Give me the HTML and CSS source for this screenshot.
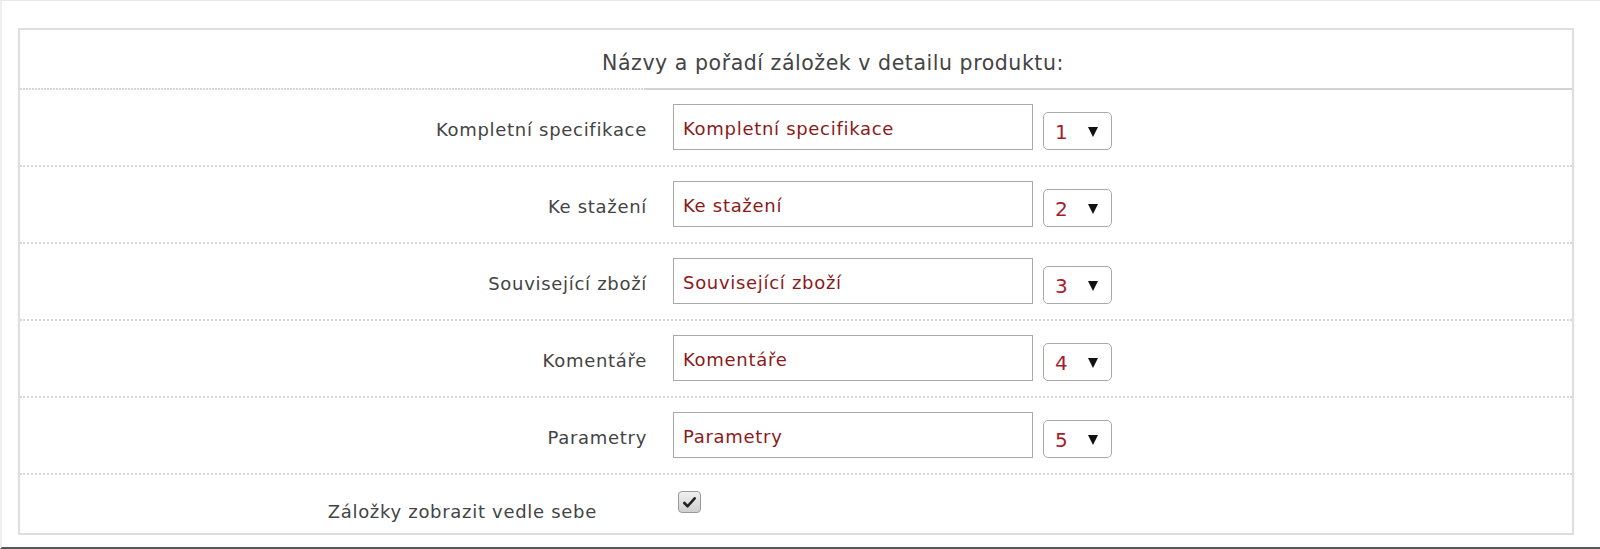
FILE: index.html
```html
<!DOCTYPE html>
<html lang="cs">
<head>
<meta charset="utf-8">
<title>Záložky</title>
<link rel="stylesheet" href="styles.css">
</head>
<body>
<div class="page">
  <div class="box">
    <div class="head">Názvy a pořadí záložek v detailu produktu:</div>

    <div class="row">
      <div class="label">Kompletní specifikace</div>
      <div class="ctrl">
        <div class="field">Kompletní specifikace</div>
        <div class="order"><span class="num">1</span><span class="arrow"></span></div>
      </div>
    </div>

    <div class="row">
      <div class="label">Ke stažení</div>
      <div class="ctrl">
        <div class="field">Ke stažení</div>
        <div class="order"><span class="num">2</span><span class="arrow"></span></div>
      </div>
    </div>

    <div class="row">
      <div class="label">Související zboží</div>
      <div class="ctrl">
        <div class="field">Související zboží</div>
        <div class="order"><span class="num">3</span><span class="arrow"></span></div>
      </div>
    </div>

    <div class="row">
      <div class="label">Komentáře</div>
      <div class="ctrl">
        <div class="field">Komentáře</div>
        <div class="order"><span class="num">4</span><span class="arrow"></span></div>
      </div>
    </div>

    <div class="row">
      <div class="label">Parametry</div>
      <div class="ctrl">
        <div class="field">Parametry</div>
        <div class="order"><span class="num">5</span><span class="arrow"></span></div>
      </div>
    </div>

    <div class="row last">
      <div class="label">Záložky zobrazit vedle sebe</div>
      <div class="ctrl">
        <div class="check">
          <svg viewBox="0 0 16 16" width="15" height="15"><path d="M2.5 8.5 L6 12 L13.5 3.5" fill="none" stroke="#222" stroke-width="2.8" stroke-linecap="round" stroke-linejoin="round"/></svg>
        </div>
      </div>
    </div>
  </div>
</div>
</body>
</html>
```

FILE: styles.css
```css
* { box-sizing: border-box; }

html, body {
  margin: 0;
  padding: 0;
  background: #ffffff;
}

body {
  font-family: "DejaVu Sans", "Liberation Sans", sans-serif;
  font-size: 18px;
  letter-spacing: 0.7px;
  color: #444444;
}

.page {
  width: 1600px;
  height: 549px;
  border-top: 1px solid #e8e8e8;
  border-left: 2px solid #efefef;
  border-bottom: 2px solid #555555;
  padding: 27px 0 0 16px;
}

.box {
  width: 1556px;
  height: 507px;
  border: 2px solid #dedede;
  display: flex;
  flex-direction: column;
}

.head {
  height: 60px;
  padding: 21px 0 0 74px;
  text-align: center;
  font-size: 20.5px;
  letter-spacing: 0.55px;
  color: #444444;
  background:
    linear-gradient(#d2d2d2, #d2d2d2) right bottom / calc(100% - 626px) 2px no-repeat,
    repeating-linear-gradient(90deg, #d6d6d6 0 2px, transparent 2px 3px) left bottom / 626px 2px no-repeat;
}

.row {
  height: 77px;
  display: grid;
  grid-template-columns: 640px 1fr;
  border-bottom: 2px dotted #d8d8d8;
}

.row.last {
  flex: 1;
  height: auto;
  border-bottom: 0;
}

.label {
  display: flex;
  align-items: center;
  justify-content: flex-end;
  padding: 3px 13px 0 0;
  color: #444444;
}

.ctrl {
  display: flex;
  align-items: flex-end;
  gap: 10px;
  padding: 0 0 15px 13px;
}

.field {
  width: 360px;
  height: 46px;
  border: 1px solid #a9a9a9;
  padding: 3px 9px 0;
  display: flex;
  align-items: center;
  color: #8b1a1a;
}

.order {
  width: 69px;
  height: 38px;
  border: 1px solid #aaaaaa;
  border-radius: 5px;
  display: flex;
  align-items: center;
  justify-content: space-between;
  padding: 2px 13px 0 11px;
  color: #a51d2a;
  font-size: 20px;
}

.arrow {
  width: 0;
  height: 0;
  border-left: 5.5px solid transparent;
  border-right: 5.5px solid transparent;
  border-top: 10px solid #111111;
}

.row.last .label {
  padding-right: 63px;
  padding-top: 14px;
}

.row.last .ctrl {
  align-items: flex-start;
  padding: 16px 0 0 18px;
}

.check {
  width: 23px;
  height: 22px;
  border: 1px solid #9a9a9a;
  border-radius: 4px;
  background: linear-gradient(#f0f0f0, #cfcfcf);
  display: flex;
  align-items: center;
  justify-content: center;
}
```
